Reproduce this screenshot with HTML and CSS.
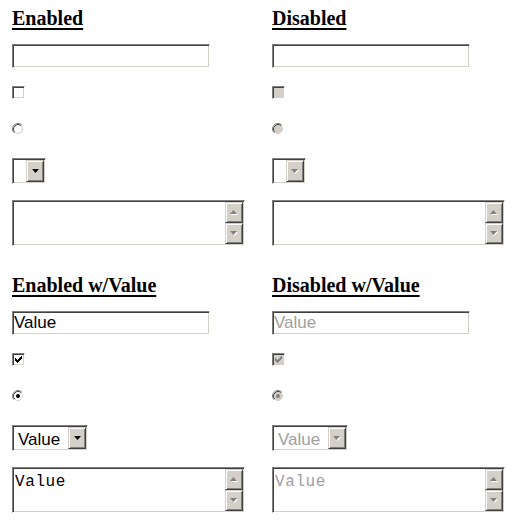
FILE: index.html
```html
<!DOCTYPE html>
<html>
<head>
<meta charset="utf-8">
<title>Form controls</title>
<link rel="stylesheet" href="styles.css">
</head>
<body>
<div class="page">
  <section class="cell">
    <h2 class="title">Enabled</h2>
    <input class="text" type="text">
    <span class="check"></span>
    <span class="radio"><svg width="12" height="12" viewBox="0 0 12 12"><circle cx="6" cy="6" r="4.5" fill="#fff"/><path d="M2.11 9.89A5.5 5.5 0 0 1 9.89 2.11" stroke="#808080" fill="none"/><path d="M9.89 2.11A5.5 5.5 0 0 1 2.11 9.89" stroke="#fff" fill="none"/><path d="M2.82 9.18A4.5 4.5 0 0 1 9.18 2.82" stroke="#404040" fill="none"/><path d="M9.18 2.82A4.5 4.5 0 0 1 2.82 9.18" stroke="#d4d0c8" fill="none"/></svg></span>
    <div class="select sel-empty"><select class="sel"></select><span class="btn"><svg width="7" height="4" viewBox="0 0 7 4"><path d="M0 0h7l-3.5 4z" fill="#000"/></svg></span></div>
    <div class="area"><textarea class="ta"></textarea><div class="scroll"><span class="btn sb"><svg width="8" height="5" viewBox="0 0 8 5"><path d="M4.5 1L8 5H1z" fill="#fff"/><path d="M3.5 0L7 4H0z" fill="#808080"/></svg></span><span class="btn sb"><svg width="8" height="5" viewBox="0 0 8 5"><path d="M1 1h7L4.5 5z" fill="#fff"/><path d="M0 0h7L3.5 4z" fill="#808080"/></svg></span></div></div>
  </section>
  <section class="cell">
    <h2 class="title">Disabled</h2>
    <input class="text off" type="text" disabled>
    <span class="check off"></span>
    <span class="radio"><svg width="12" height="12" viewBox="0 0 12 12"><circle cx="6" cy="6" r="4.5" fill="#d4d0c8"/><path d="M2.11 9.89A5.5 5.5 0 0 1 9.89 2.11" stroke="#808080" fill="none"/><path d="M9.89 2.11A5.5 5.5 0 0 1 2.11 9.89" stroke="#fff" fill="none"/><path d="M2.82 9.18A4.5 4.5 0 0 1 9.18 2.82" stroke="#404040" fill="none"/><path d="M9.18 2.82A4.5 4.5 0 0 1 2.82 9.18" stroke="#d4d0c8" fill="none"/></svg></span>
    <div class="select sel-empty"><select class="sel off" disabled></select><span class="btn"><svg width="8" height="5" viewBox="0 0 8 5"><path d="M1 1h7L4.5 5z" fill="#fff"/><path d="M0 0h7L3.5 4z" fill="#808080"/></svg></span></div>
    <div class="area"><textarea class="ta off" disabled></textarea><div class="scroll"><span class="btn sb"><svg width="8" height="5" viewBox="0 0 8 5"><path d="M4.5 1L8 5H1z" fill="#fff"/><path d="M3.5 0L7 4H0z" fill="#808080"/></svg></span><span class="btn sb"><svg width="8" height="5" viewBox="0 0 8 5"><path d="M1 1h7L4.5 5z" fill="#fff"/><path d="M0 0h7L3.5 4z" fill="#808080"/></svg></span></div></div>
  </section>
  <section class="cell">
    <h2 class="title">Enabled w/Value</h2>
    <input class="text" type="text" value="Value">
    <span class="check"><svg width="7" height="7" viewBox="0 0 7 7"><path d="M6 0h1v3h-1z M5 1h1v3h-1z M4 2h1v3h-1z M3 3h1v3h-1z M2 4h1v3h-1z M1 3h1v3h-1z M0 2h1v3h-1z" fill="#000"/></svg></span>
    <span class="radio"><svg width="12" height="12" viewBox="0 0 12 12"><circle cx="6" cy="6" r="4.5" fill="#fff"/><path d="M2.11 9.89A5.5 5.5 0 0 1 9.89 2.11" stroke="#808080" fill="none"/><path d="M9.89 2.11A5.5 5.5 0 0 1 2.11 9.89" stroke="#fff" fill="none"/><path d="M2.82 9.18A4.5 4.5 0 0 1 9.18 2.82" stroke="#404040" fill="none"/><path d="M9.18 2.82A4.5 4.5 0 0 1 2.82 9.18" stroke="#d4d0c8" fill="none"/><circle cx="6" cy="6" r="2" fill="#000"/></svg></span>
    <div class="select sel-value"><select class="sel"><option>Value</option></select><span class="btn"><svg width="7" height="4" viewBox="0 0 7 4"><path d="M0 0h7l-3.5 4z" fill="#000"/></svg></span></div>
    <div class="area"><textarea class="ta">Value</textarea><div class="scroll"><span class="btn sb"><svg width="8" height="5" viewBox="0 0 8 5"><path d="M4.5 1L8 5H1z" fill="#fff"/><path d="M3.5 0L7 4H0z" fill="#808080"/></svg></span><span class="btn sb"><svg width="8" height="5" viewBox="0 0 8 5"><path d="M1 1h7L4.5 5z" fill="#fff"/><path d="M0 0h7L3.5 4z" fill="#808080"/></svg></span></div></div>
  </section>
  <section class="cell">
    <h2 class="title">Disabled w/Value</h2>
    <input class="text off" type="text" value="Value" disabled>
    <span class="check off"><svg width="7" height="7" viewBox="0 0 7 7"><path d="M6 0h1v3h-1z M5 1h1v3h-1z M4 2h1v3h-1z M3 3h1v3h-1z M2 4h1v3h-1z M1 3h1v3h-1z M0 2h1v3h-1z" fill="#808080"/></svg></span>
    <span class="radio"><svg width="12" height="12" viewBox="0 0 12 12"><circle cx="6" cy="6" r="4.5" fill="#d4d0c8"/><path d="M2.11 9.89A5.5 5.5 0 0 1 9.89 2.11" stroke="#808080" fill="none"/><path d="M9.89 2.11A5.5 5.5 0 0 1 2.11 9.89" stroke="#fff" fill="none"/><path d="M2.82 9.18A4.5 4.5 0 0 1 9.18 2.82" stroke="#404040" fill="none"/><path d="M9.18 2.82A4.5 4.5 0 0 1 2.82 9.18" stroke="#d4d0c8" fill="none"/><circle cx="6" cy="6" r="2" fill="#808080"/></svg></span>
    <div class="select sel-value"><select class="sel off" disabled><option>Value</option></select><span class="btn"><svg width="8" height="5" viewBox="0 0 8 5"><path d="M1 1h7L4.5 5z" fill="#fff"/><path d="M0 0h7L3.5 4z" fill="#808080"/></svg></span></div>
    <div class="area"><textarea class="ta off" disabled>Value</textarea><div class="scroll"><span class="btn sb"><svg width="8" height="5" viewBox="0 0 8 5"><path d="M4.5 1L8 5H1z" fill="#fff"/><path d="M3.5 0L7 4H0z" fill="#808080"/></svg></span><span class="btn sb"><svg width="8" height="5" viewBox="0 0 8 5"><path d="M1 1h7L4.5 5z" fill="#fff"/><path d="M0 0h7L3.5 4z" fill="#808080"/></svg></span></div></div>
  </section>
</div>
</body>
</html>
```

FILE: styles.css
```css
html, body {
  margin: 0;
  background: #fff;
  font-family: "Liberation Serif", serif;
}

.page {
  display: grid;
  grid-template-columns: 260px 247px;
  row-gap: 28px;
  padding: 7px 0 0 12px;
}

.cell {
  display: flex;
  flex-direction: column;
  align-items: flex-start;
}

.title {
  margin: 0;
  font: bold 20px/23px "Liberation Serif", serif;
  color: #000;
  text-decoration: underline;
  text-decoration-thickness: 2px;
  text-underline-offset: 3px;
}

.text {
  display: block;
  width: 198px;
  height: 24px;
  box-sizing: border-box;
  margin: 14px 0 0;
  padding: 1px 1px;
  border: 1px solid;
  border-color: #808080 #fff #fff #808080;
  box-shadow: inset 1px 1px #404040, inset -1px -1px #d4d0c8;
  background: #fff;
  font: 17px "Liberation Sans", Arial, sans-serif;
  color: #000;
  outline: none;
}

.text.off {
  color: #a0a0a0;
  -webkit-text-fill-color: #a0a0a0;
  opacity: 1;
}

.check {
  display: flex;
  align-items: center;
  justify-content: center;
  width: 13px;
  height: 13px;
  box-sizing: border-box;
  margin-top: 18px;
  border: 1px solid;
  border-color: #808080 #fff #fff #808080;
  box-shadow: inset 1px 1px #404040, inset -1px -1px #d4d0c8;
  background: #fff;
}

.check.off {
  background: #d4d0c8;
}

.check svg {
  display: block;
}

.radio {
  display: block;
  width: 12px;
  height: 12px;
  margin-top: 24px;
}

.radio svg {
  display: block;
}

.select {
  display: flex;
  height: 26px;
  box-sizing: border-box;
  margin-top: 23px;
  padding: 1px;
  border: 1px solid;
  border-color: #808080 #fff #fff #808080;
  box-shadow: inset 1px 1px #404040, inset -1px -1px #d4d0c8;
  background: #fff;
}

.sel-empty {
  width: 34px;
}

.sel-value {
  width: 76px;
}

.sel {
  -webkit-appearance: none;
  appearance: none;
  flex: 1;
  min-width: 0;
  margin: 0;
  padding: 3px 0 0 4px;
  border: 0;
  border-radius: 0;
  background: #fff;
  font: 17px "Liberation Sans", Arial, sans-serif;
  color: #000;
  outline: none;
  opacity: 1;
}

.sel.off {
  color: #a0a0a0;
}

.btn {
  display: flex;
  align-items: center;
  justify-content: center;
  width: 18px;
  box-sizing: border-box;
  border: 1px solid;
  border-color: #d4d0c8 #404040 #404040 #d4d0c8;
  box-shadow: inset 1px 1px #fff, inset -1px -1px #808080;
  background: #d4d0c8;
}

.btn svg {
  display: block;
}

.area {
  display: flex;
  width: 233px;
  height: 46px;
  box-sizing: border-box;
  margin-top: 16px;
  padding: 1px;
  border: 1px solid;
  border-color: #808080 #fff #fff #808080;
  box-shadow: inset 1px 1px #404040, inset -1px -1px #d4d0c8;
  background: #fff;
}

.ta {
  flex: 1;
  min-width: 0;
  margin: 0;
  padding: 4px 0 0 1px;
  border: 0;
  resize: none;
  overflow: hidden;
  background: #fff;
  font: 16px "Liberation Mono", "Courier New", monospace;
  letter-spacing: 0.6px;
  color: #000;
  outline: none;
}

.ta.off {
  color: #a0a0a0;
  -webkit-text-fill-color: #a0a0a0;
}

.scroll {
  display: flex;
  flex-direction: column;
  width: 18px;
}

.sb {
  flex: 1;
  padding-bottom: 1px;
}
```
